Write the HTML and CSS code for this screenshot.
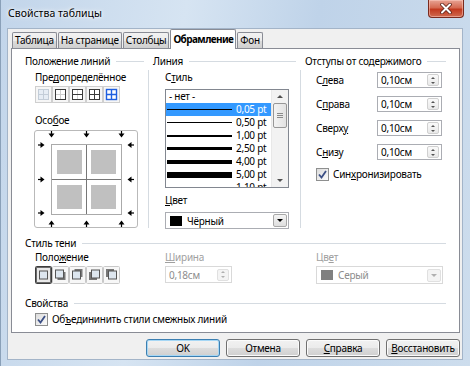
FILE: index.html
```html
<!DOCTYPE html>
<html lang="ru">
<head>
  <meta charset="UTF-8">
  <title>Свойства таблицы</title>
  <link rel="stylesheet" href="styles.css">
</head>
<body>
  <div class="window">
    <div class="titlebar">
      <span class="title">Свойства таблицы</span>
      <div class="close">
        <svg width="14" height="11" viewBox="0 0 14 11">
          <path d="M3 1.5 L11 9.5 M11 1.5 L3 9.5" stroke="#5a2118" stroke-width="3.6" stroke-linecap="round"/>
          <path d="M3 1.5 L11 9.5 M11 1.5 L3 9.5" stroke="#fff" stroke-width="2" stroke-linecap="round"/>
        </svg>
      </div>
    </div>

    <div class="client">
      <div class="tabs">
        <div class="tab">Таблица</div>
        <div class="tab">На странице</div>
        <div class="tab">Столбцы</div>
        <div class="tab active">Обрамление</div>
        <div class="tab">Фон</div>
      </div>

      <div class="panel">
        <div class="top">
          <div class="legend">Положение линий</div>
          <div class="legend col-3">Линия</div>
          <div class="legend col-5">Отступы от содержимого</div>

          <div class="col col-pos">
            <div class="label">Пре<u>д</u>определённое</div>
            <div class="presets">
              <svg width="17" height="17" viewBox="0 0 17 17">
                <rect x="0.5" y="0.5" width="16" height="16" fill="#f6f6f6" stroke="#cfcfcf"/>
                <rect x="3.5" y="3.5" width="10" height="10" fill="#e6edf5" stroke="#c3cdd8"/>
                <path d="M8.5 3.5 V13.5 M3.5 8.5 H13.5" stroke="#c3cdd8"/>
              </svg>
              <svg width="17" height="17" viewBox="0 0 17 17">
                <rect x="0.5" y="0.5" width="16" height="16" fill="#f6f6f6" stroke="#cfcfcf"/>
                <rect x="3.5" y="3.5" width="10" height="10" fill="#fff" stroke="#3a3a3a"/>
                <path d="M8.5 4 V13 M4 8.5 H13" stroke="#cfcfcf"/>
              </svg>
              <svg width="17" height="17" viewBox="0 0 17 17">
                <rect x="0.5" y="0.5" width="16" height="16" fill="#f6f6f6" stroke="#cfcfcf"/>
                <rect x="3.5" y="3.5" width="10" height="10" fill="#fff" stroke="#3a3a3a"/>
                <path d="M8.5 4 V13" stroke="#cfcfcf"/>
                <path d="M4 8.5 H13" stroke="#3a3a3a"/>
              </svg>
              <svg width="17" height="17" viewBox="0 0 17 17">
                <rect x="0.5" y="0.5" width="16" height="16" fill="#f6f6f6" stroke="#cfcfcf"/>
                <rect x="3.5" y="3.5" width="10" height="10" fill="#fff" stroke="#3a3a3a"/>
                <path d="M8.5 4 V13 M4 8.5 H13" stroke="#3a3a3a"/>
              </svg>
              <svg width="17" height="17" viewBox="0 0 17 17">
                <rect x="0.5" y="0.5" width="16" height="16" fill="#f6f6f6" stroke="#cfcfcf"/>
                <rect x="3.5" y="3.5" width="10" height="10" fill="#fff" stroke="#1f5fe0" stroke-width="1.4"/>
                <path d="M8.5 4 V13 M4 8.5 H13" stroke="#1f5fe0" stroke-width="1.4"/>
              </svg>
            </div>
            <div class="label label-gap">Осо<u>б</u>ое</div>
            <div class="frame-box">
              <svg width="102" height="96" viewBox="0 0 102 96">
                <defs>
                  <g id="arr">
                    <rect x="-0.6" y="-4" width="1.2" height="3" fill="#000"/>
                    <path d="M-3 -1.5 H3 L0 2.5 Z" fill="#000"/>
                  </g>
                </defs>
                <rect x="16.5" y="13.5" width="70" height="70" fill="#fff" stroke="#555" stroke-dasharray="1 1"/>
                <path d="M51.5 14 V83 M17 48.5 H86" stroke="#777"/>
                <rect x="22" y="19" width="25" height="24" fill="#c0c0c0"/>
                <rect x="56" y="19" width="25" height="24" fill="#c0c0c0"/>
                <rect x="22" y="54" width="25" height="24" fill="#c0c0c0"/>
                <rect x="56" y="54" width="25" height="24" fill="#c0c0c0"/>
                <use href="#arr" transform="translate(16.5 4)"/>
                <use href="#arr" transform="translate(51.5 4)"/>
                <use href="#arr" transform="translate(86.5 4)"/>
                <use href="#arr" transform="translate(16.5 92) rotate(180)"/>
                <use href="#arr" transform="translate(51.5 92) rotate(180)"/>
                <use href="#arr" transform="translate(86.5 92) rotate(180)"/>
                <use href="#arr" transform="translate(7 14) rotate(-90)"/>
                <use href="#arr" transform="translate(7 48.5) rotate(-90)"/>
                <use href="#arr" transform="translate(7 82) rotate(-90)"/>
                <use href="#arr" transform="translate(95 14) rotate(90)"/>
                <use href="#arr" transform="translate(95 48.5) rotate(90)"/>
                <use href="#arr" transform="translate(95 82) rotate(90)"/>
              </svg>
            </div>
          </div>

          <div class="vsep col-2"></div>

          <div class="col col-line">
            <div class="label">С<u>т</u>иль</div>
            <div class="listbox">
              <div class="list">
                <div class="row"><span class="none">- нет -</span></div>
                <div class="row selected"><span class="stroke" style="height:1px"></span><span>0,05 pt</span></div>
                <div class="row"><span class="stroke" style="height:1px"></span><span>0,50 pt</span></div>
                <div class="row"><span class="stroke" style="height:2px"></span><span>1,00 pt</span></div>
                <div class="row"><span class="stroke" style="height:3px"></span><span>2,50 pt</span></div>
                <div class="row"><span class="stroke" style="height:4px"></span><span>4,00 pt</span></div>
                <div class="row"><span class="stroke" style="height:6px"></span><span>5,00 pt</span></div>
                <div class="row"><span class="stroke" style="height:1px"></span><span>1,10 pt</span></div>
              </div>
              <div class="scrollbar">
                <span class="sb-arrow up"></span>
                <span class="thumb"><i></i><i></i><i></i></span>
                <span class="sb-track"></span>
                <span class="sb-arrow down"></span>
              </div>
            </div>
            <div class="label label-gap2"><u>Ц</u>вет</div>
            <div class="combo">
              <span class="swatch"></span>
              <span class="combo-text">Чёрный</span>
              <span class="combo-btn"></span>
            </div>
          </div>

          <div class="vsep col-4"></div>

          <div class="col col-space">
            <div class="spin-row"><span class="spin-label">С<u>л</u>ева</span><div class="spin"><span class="spin-text">0,10см</span><span class="arrows"><span class="up"></span><span class="down"></span></span></div></div>
            <div class="spin-row"><span class="spin-label">С<u>п</u>рава</span><div class="spin"><span class="spin-text">0,10см</span><span class="arrows"><span class="up"></span><span class="down"></span></span></div></div>
            <div class="spin-row"><span class="spin-label">Сверх<u>у</u></span><div class="spin"><span class="spin-text">0,10см</span><span class="arrows"><span class="up"></span><span class="down"></span></span></div></div>
            <div class="spin-row"><span class="spin-label">С<u>н</u>изу</span><div class="spin"><span class="spin-text">0,10см</span><span class="arrows"><span class="up"></span><span class="down"></span></span></div></div>
            <label class="check sync">
              <span class="cb"><svg width="9" height="9" viewBox="0 0 9 9"><path d="M1 4.5 L3.5 7.5 L8 1" fill="none" stroke="#3b4f85" stroke-width="1.8"/></svg></span>
              <span>Син<u>х</u>ронизировать</span>
            </label>
          </div>
        </div>

        <div class="legend shadow-legend">Стиль тени</div>
        <div class="shadow-grid">
          <div class="label">Поло<u>ж</u>ение</div>
          <div class="label disabled"><u>Ш</u>ирина</div>
          <div class="label disabled">Цв<u>е</u>т</div>

          <div class="shadows">
            <svg width="17" height="18" viewBox="0 0 17 18">
              <rect x="0.5" y="0.5" width="16" height="17" rx="1" fill="#e9e9e9" stroke="#3c3c3c"/>
              <rect x="1.5" y="1.5" width="14" height="15" fill="none" stroke="#6c6c6c"/>
              <rect x="4.5" y="5" width="8" height="8" fill="#dde6ef" stroke="#555"/>
            </svg>
            <svg width="17" height="18" viewBox="0 0 17 18">
              <rect x="0.5" y="0.5" width="16" height="17" rx="1" fill="#f7f7f7" stroke="#c8c8c8"/>
              <rect x="5.5" y="6" width="8" height="8" fill="#777"/>
              <rect x="3.5" y="4" width="8" height="8" fill="#dde6ef" stroke="#555"/>
            </svg>
            <svg width="17" height="18" viewBox="0 0 17 18">
              <rect x="0.5" y="0.5" width="16" height="17" rx="1" fill="#f7f7f7" stroke="#c8c8c8"/>
              <rect x="5.5" y="3" width="8" height="8" fill="#777"/>
              <rect x="3.5" y="5" width="8" height="8" fill="#dde6ef" stroke="#555"/>
            </svg>
            <svg width="17" height="18" viewBox="0 0 17 18">
              <rect x="0.5" y="0.5" width="16" height="17" rx="1" fill="#f7f7f7" stroke="#c8c8c8"/>
              <rect x="3" y="6" width="8" height="8" fill="#777"/>
              <rect x="5.5" y="4" width="8" height="8" fill="#dde6ef" stroke="#555"/>
            </svg>
            <svg width="17" height="18" viewBox="0 0 17 18">
              <rect x="0.5" y="0.5" width="16" height="17" rx="1" fill="#f7f7f7" stroke="#c8c8c8"/>
              <rect x="3" y="3" width="8" height="8" fill="#777"/>
              <rect x="5.5" y="5" width="8" height="8" fill="#dde6ef" stroke="#555"/>
            </svg>
          </div>
          <div class="spin spin-width disabled-box"><span class="spin-text">0,18см</span><span class="arrows"><span class="up"></span><span class="down"></span></span></div>
          <div class="combo combo-shadow disabled-box">
            <span class="swatch gray"></span>
            <span class="combo-text">Серый</span>
            <span class="combo-btn"></span>
          </div>
        </div>

        <div class="legend props-legend">Свойства</div>
        <label class="check merge">
          <span class="cb"><svg width="9" height="9" viewBox="0 0 9 9"><path d="M1 4.5 L3.5 7.5 L8 1" fill="none" stroke="#3b4f85" stroke-width="1.8"/></svg></span>
          <span>Об<u>ъ</u>едининить стили смежных линий</span>
        </label>
      </div>

      <div class="buttons">
        <button class="btn default">OK</button>
        <button class="btn">Отмена</button>
        <button class="btn"><u>С</u>правка</button>
        <button class="btn"><u>В</u>осстановить</button>
      </div>
    </div>
  </div>
</body>
</html>
```

FILE: styles.css
```css
* {
  box-sizing: border-box;
}

body {
  margin: 0;
  font-family: "Noto Sans", "Liberation Sans", sans-serif;
  font-size: 10px;
  letter-spacing: -0.25px;
  color: #000;
  background: #c6d8ec;
}

u {
  text-underline-offset: 1px;
}

.window {
  width: 470px;
  height: 366px;
  display: flex;
  flex-direction: column;
  background: linear-gradient(100deg, #c2d5ea 0%, #d6e4f2 35%, #bfd3e9 60%, #cddded 100%);
  border-left: 1px solid #8aa0b8;
}

.titlebar {
  height: 28px;
  display: flex;
  justify-content: space-between;
  align-items: flex-start;
  padding-left: 7px;
}
.title {
  line-height: 26px;
  font-size: 10.5px;
  letter-spacing: 0;
  text-shadow: 0 0 6px #fff, 0 0 3px #fff;
}
.close {
  width: 36px;
  height: 18px;
  margin-right: 6px;
  display: flex;
  align-items: center;
  justify-content: center;
  border: 1px solid #7a2a1e;
  border-top: none;
  border-radius: 0 0 4px 4px;
  background: linear-gradient(#e8a394 0%, #d56a52 45%, #c2391f 55%, #cf6a4f 100%);
  box-shadow: inset 0 0 0 1px rgba(255, 210, 200, 0.5);
}

.client {
  flex: 1;
  margin: 0 7px 6px 6px;
  border: 1px solid #a3b4c8;
  background: #f0f0f0;
  display: flex;
  flex-direction: column;
}

/* tabs */
.tabs {
  display: flex;
  align-items: flex-end;
  height: 19px;
  padding-left: 4px;
  position: relative;
  z-index: 1;
}
.tab {
  height: 16px;
  line-height: 14px;
  padding: 0 2px;
  border: 1px solid #898c95;
  border-bottom: none;
  border-radius: 2px 2px 0 0;
  background: linear-gradient(#f2f2f2 0%, #ebebeb 50%, #dddddd 51%, #cfcfcf 100%);
  white-space: nowrap;
}
.tab + .tab {
  margin-left: 1px;
}
.tab.active {
  height: 20px;
  margin-bottom: -1px;
  line-height: 18px;
  font-weight: bold;
  letter-spacing: -0.6px;
  background: #fff;
  padding: 0 2px;
}

.panel {
  height: 285px;
  margin: 0 2px 0 3px;
  border: 1px solid #898c95;
  background: #fff;
  padding: 5px 13px 0 13px;
}

/* group headings with a line */
.legend {
  display: flex;
  align-items: center;
  gap: 6px;
  line-height: 14px;
  white-space: nowrap;
}
.legend::after {
  content: "";
  flex: 1;
  border-top: 1px solid #d5dbe1;
}

.top {
  display: grid;
  grid-template-columns: 119px 1px 143px 1px 141px;
  grid-template-rows: 14px 159px;
  column-gap: 4px;
  row-gap: 2px;
}
.col-2 { grid-column: 2; grid-row: 2; }
.col-3 { grid-column: 3; grid-row: 1; }
.col-4 { grid-column: 4; grid-row: 2; }
.col-5 { grid-column: 5; grid-row: 1; }

.vsep {
  height: 158px;
  background: #d5dbe1;
}

.label {
  line-height: 14px;
  white-space: nowrap;
}
.disabled {
  color: #a0a0a0;
}

.col-pos {
  grid-column: 1;
  grid-row: 2;
  padding-left: 10px;
}
.presets {
  display: flex;
  margin-top: 2px;
}
.label-gap {
  margin-top: 10px;
}
.frame-box {
  margin: 3px 0 0 -1px;
  width: 104px;
  height: 98px;
  border: 1px solid #b9b9b9;
  border-radius: 3px;
  background: #fff;
}
.frame-box svg {
  display: block;
}

/* line style list */
.col-line {
  grid-column: 3;
  grid-row: 2;
  padding-left: 12px;
}
.listbox {
  margin-top: 5px;
  width: 124px;
  height: 99px;
  border: 1px solid #828790;
  display: flex;
  overflow: hidden;
}
.list {
  flex: 1;
  min-width: 0;
}
.row {
  height: 13px;
  line-height: 13px;
  display: flex;
  align-items: center;
  padding-left: 1px;
  white-space: nowrap;
}
.row .none {
  padding-left: 2px;
}
.row.selected {
  background: #3399ff;
  color: #fff;
}
.stroke {
  flex: none;
  width: 65px;
  margin-right: 4px;
  background: #000;
}
.scrollbar {
  width: 17px;
  display: flex;
  flex-direction: column;
  background: #f2f2f2;
  border-left: 1px solid #e8e8e8;
}
.sb-arrow {
  height: 13px;
  display: flex;
  align-items: center;
  justify-content: center;
}
.sb-arrow::after {
  content: "";
  border-left: 3px solid transparent;
  border-right: 3px solid transparent;
}
.sb-arrow.up::after {
  border-bottom: 3px solid #505050;
}
.sb-arrow.down::after {
  border-top: 3px solid #505050;
}
.thumb {
  height: 25px;
  margin: 0 1px;
  border: 1px solid #979797;
  border-radius: 2px;
  background: linear-gradient(90deg, #f3f3f3, #e2e2e2);
  display: flex;
  flex-direction: column;
  align-items: center;
  justify-content: center;
  gap: 1px;
}
.thumb i {
  width: 6px;
  height: 1px;
  background: #8a8a8a;
}
.sb-track {
  flex: 1;
}

.label-gap2 {
  margin-top: 5px;
}
.combo {
  margin-top: 5px;
  width: 124px;
  height: 17px;
  border: 1px solid #abadb3;
  background: #fff;
  display: flex;
  align-items: center;
  padding-left: 4px;
}
.swatch {
  width: 12px;
  height: 10px;
  background: #000;
  margin-right: 5px;
}
.swatch.gray {
  background: #808080;
}
.combo-text {
  flex: 1;
  line-height: 14px;
}
.combo-btn {
  width: 14px;
  height: 13px;
  margin-right: 1px;
  border: 1px solid #a8a8a8;
  border-radius: 2px;
  background: linear-gradient(#f4f4f4, #dedede);
  display: flex;
  align-items: center;
  justify-content: center;
}
.combo-btn::after {
  content: "";
  border-left: 3px solid transparent;
  border-right: 3px solid transparent;
  border-top: 3px solid #000;
}

/* spacing column */
.col-space {
  grid-column: 5;
  grid-row: 2;
  padding-left: 11px;
}
.spin-row {
  display: flex;
  align-items: center;
  height: 16px;
  margin-top: 8px;
}
.spin-row:first-child {
  margin-top: 2px;
}
.spin-label {
  width: 61px;
}
.spin {
  width: 65px;
  height: 16px;
  border: 1px solid #abadb3;
  background: #fff;
  display: flex;
  align-items: center;
}
.spin-text {
  flex: 1;
  padding-left: 3px;
  line-height: 14px;
}
.arrows {
  width: 12px;
  height: 12px;
  margin-right: 2px;
  display: flex;
  flex-direction: column;
  border: 1px solid #d0d0d0;
  border-radius: 2px;
  background: linear-gradient(#fafafa, #e9e9e9);
}
.arrows span {
  flex: 1;
  display: flex;
  align-items: center;
  justify-content: center;
}
.arrows span::after {
  content: "";
  border-left: 2px solid transparent;
  border-right: 2px solid transparent;
}
.arrows .up::after {
  border-bottom: 2px solid #555;
}
.arrows .down::after {
  border-top: 2px solid #555;
}

.check {
  display: flex;
  align-items: center;
  gap: 4px;
  line-height: 14px;
  white-space: nowrap;
}
.cb {
  width: 13px;
  height: 13px;
  border: 1px solid #8e8f8f;
  background: linear-gradient(135deg, #dcdcdc, #fbfbfb);
  display: flex;
  align-items: center;
  justify-content: center;
}
.sync {
  margin-top: 7px;
}

/* shadow section */
.shadow-legend {
  margin-top: 7px;
}
.shadow-grid {
  display: grid;
  grid-template-columns: 130px 151px 127px;
  grid-template-rows: 14px 18px;
  row-gap: 2px;
  padding-left: 10px;
}
.shadows {
  display: flex;
}
.shadows svg {
  display: block;
}
.spin-width {
  width: 67px;
  height: 17px;
}
.disabled-box {
  border-color: #d9d9d9;
  color: #8d8d8d;
}
.disabled-box .arrows,
.disabled-box .combo-btn {
  border-color: #e0e0e0;
  background: #f4f4f4;
}
.disabled-box .arrows span::after {
  border-top-color: #b0b0b0;
  border-bottom-color: #b0b0b0;
}
.disabled-box .combo-btn::after {
  border-top-color: #b0b0b0;
}
.combo-shadow {
  margin-top: 0;
  width: 127px;
  height: 18px;
}

.props-legend {
  margin-top: 12px;
}
.merge {
  margin-top: 2px;
  padding-left: 10px;
}

/* dialog buttons */
.buttons {
  display: flex;
  justify-content: flex-end;
  gap: 6px;
  margin-top: 6px;
  padding-right: 2px;
}
.btn {
  width: 74px;
  height: 18px;
  padding: 0;
  font: inherit;
  letter-spacing: inherit;
  color: #000;
  border: 1px solid #707070;
  border-radius: 3px;
  background: linear-gradient(#f2f2f2 0%, #ebebeb 50%, #dddddd 51%, #cfcfcf 100%);
  box-shadow: inset 0 0 0 1px #fbfbfb;
}
.btn.default {
  border-color: #3c7fb1;
  box-shadow: inset 0 0 0 1px #a6d7f5;
}
```
